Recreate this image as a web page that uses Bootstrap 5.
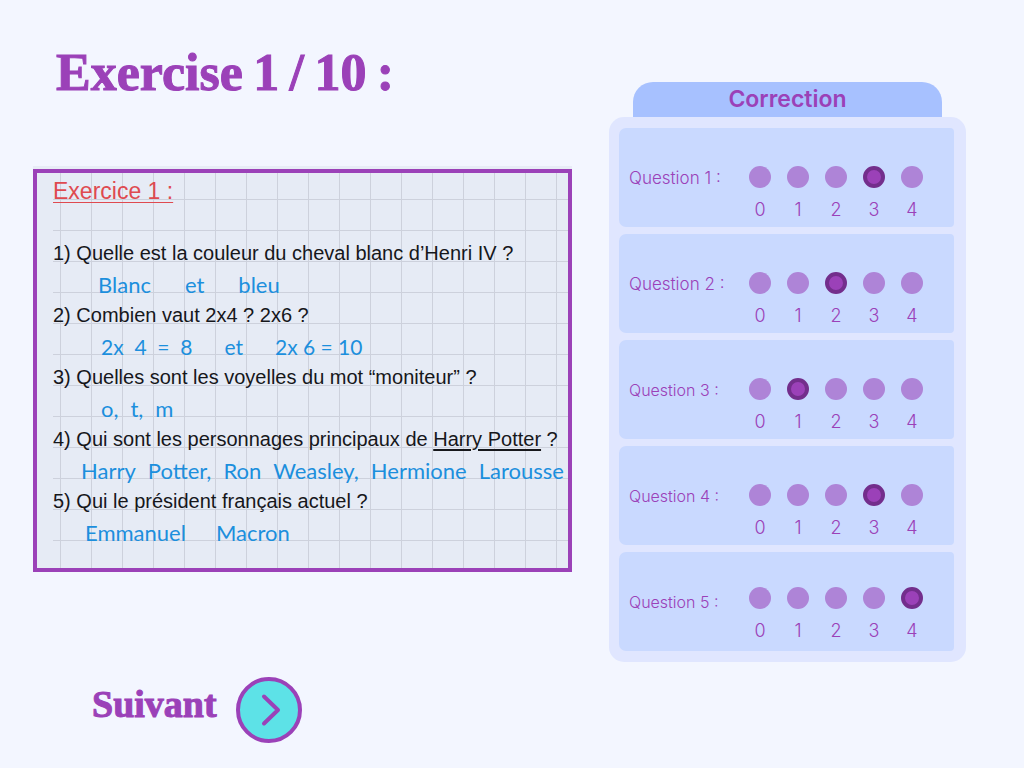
<!DOCTYPE html>
<html lang="fr">
<head>
<meta charset="utf-8">
<meta name="viewport" content="width=device-width, initial-scale=1">
<title>Correction – Exercise 1 / 10</title>
<link href="https://cdn.jsdelivr.net/npm/bootstrap@5.3.0/dist/css/bootstrap.min.css" rel="stylesheet">
<style>
  :root { --violet: #9b41b8; --violet-dark: #732e8c; --violet-soft: #ae84d7; --ink: #1c8fdd; }
  body { background: #f3f6ff; color: var(--violet); font-family: Inter, "Liberation Sans", sans-serif; }
  .page-grid { display: grid; grid-template-columns: minmax(0, 539fr) minmax(0, 357fr); column-gap: 37px; padding: 43px 58px 24px 33px; }
  .display-serif { font-family: "Liberation Serif", serif; font-weight: 700; color: var(--violet); -webkit-text-stroke: 1px var(--violet); }
  .page-title { font-size: 52px; line-height: 60px; padding-left: 23px; margin-bottom: 66px; }

  /* Squared paper: 31px pitch, rows start after the margin */
  .paper {
    border: 4px solid var(--violet); padding: 3px 0 20px 16px; white-space: nowrap;
    background-color: #e6ebf5; box-shadow: 0 -3px 0 #e8ecf6;
    background-image: linear-gradient(#cdd1dc 1px, transparent 1px), linear-gradient(90deg, #cdd1dc 1px, transparent 1px);
    background-size: 31px 31px; background-position: 0 23px, 23px 0;
    background-origin: content-box, padding-box; background-clip: content-box, padding-box;
    font: 20px/31px "Liberation Sans", sans-serif; color: #16171b;
  }
  .paper-title { font: 23px/31px "Liberation Sans", sans-serif; color: #df4a50; margin-bottom: 31px; text-decoration: underline; text-decoration-thickness: 1px; text-underline-offset: 3px; }
  .paper u { text-underline-offset: 3px; }
  .answer { display: flex; margin: 0; color: var(--ink); font: 22px/31px Lato, "Liberation Sans", sans-serif; }
  .answer-1 { padding-left: 45px; gap: 34px; }
  .answer-2 { padding-left: 48px; gap: 32px; font-size: 21px; }
  .answer-3 { padding-left: 48px; gap: 12px; }
  .answer-4 { padding-left: 28px; gap: 12px; }
  .answer-5 { padding-left: 32px; gap: 30px; }

  .next-btn { background: none; border: 0; padding: 0; margin: 105px 0 0 59px; gap: 19px; font-size: 38px; line-height: 48px; }
  .next-btn span { padding-bottom: 12px; }

  .correction { margin-top: 39px; }
  .correction-tab { margin: 0 24px; background: #a7c1ff; border-radius: 20px 20px 0 0; font-size: 23px; line-height: 35px; font-weight: 600; }
  .correction-panel { background: #e0e6ff; border-radius: 15px; padding: 11px 12px 11px 10px; gap: 7px; }
  .question { background: #c9d9ff; border-radius: 7px 4px 4px 7px; height: 99px; padding-left: 10px; }
  .question-name { width: 112px; font-size: 16px; line-height: 24px; font-weight: 300; }
  .question-name.fs-wide { font-size: 17px; }
  .marks { padding-top: 32px; }
  .question:last-child .marks { padding-top: 26px; }
  .mark-option { width: 38px; font-size: 18px; line-height: 24px; font-weight: 300; gap: 10px; }
  .mark-option input { appearance: none; width: 22px; height: 22px; margin: 0; border-radius: 50%; background: var(--violet-soft); }
  .mark-option input:checked { background: var(--violet); border: 4px solid var(--violet-dark); }
</style>
</head>
<body>
<main class="page-grid">
  <section class="d-flex flex-column align-items-stretch">
    <h1 class="display-serif page-title">Exercise&thinsp;1&thinsp;/&thinsp;10&thinsp;:</h1>
    <article class="paper">
      <h2 class="paper-title">Exercice 1 :</h2>
      <p class="m-0">1) Quelle est la couleur du cheval blanc d’Henri IV ?</p>
      <p class="answer answer-1"><span>Blanc</span><span>et</span><span>bleu</span></p>
      <p class="m-0">2) Combien vaut 2x4 ? 2x6 ?</p>
      <p class="answer answer-2"><span>2x&nbsp; 4 &nbsp;= &nbsp;8</span><span>et</span><span>2x 6 = 10</span></p>
      <p class="m-0">3) Quelles sont les voyelles du mot “moniteur” ?</p>
      <p class="answer answer-3"><span>o,</span><span>t,</span><span>m</span></p>
      <p class="m-0">4) Qui sont les personnages principaux de <u>Harry Potter</u> ?</p>
      <p class="answer answer-4"><span>Harry</span><span>Potter,</span><span>Ron</span><span>Weasley,</span><span>Hermione</span><span>Larousse</span></p>
      <p class="m-0">5) Qui le président français actuel ?</p>
      <p class="answer answer-5"><span>Emmanuel</span><span>Macron</span></p>
    </article>
    <button type="button" class="next-btn display-serif d-flex align-items-center align-self-start">
      <span>Suivant</span>
      <svg width="66" height="66" viewBox="0 0 66 66" aria-hidden="true"><circle cx="33" cy="33" r="31" fill="#5de2e7" stroke="#9b41b8" stroke-width="4"/><path d="M28 19.500 42 33 28 46.500" fill="none" stroke="#9b41b8" stroke-width="4" stroke-linecap="round" stroke-linejoin="round"/></svg>
    </button>
  </section>

  <section class="correction">
    <h2 class="correction-tab text-center">Correction</h2>
    <form class="correction-panel d-flex flex-column" id="questions"></form>
  </section>
</main>
<script>
  const given = [3, 2, 1, 3, 4];
  document.getElementById('questions').innerHTML = given.map((mark, i) => `
    <div class="question d-flex align-items-center" role="radiogroup" aria-labelledby="name${i}">
      <span class="question-name ${i < 2 ? 'fs-wide' : ''}" id="name${i}">Question ${i + 1} :</span>
      <div class="marks d-flex">${[0, 1, 2, 3, 4].map(v => `
        <label class="mark-option d-flex flex-column align-items-center"><input type="radio" name="q${i}" value="${v}" ${v === mark ? 'checked' : ''}><span>${v}</span></label>`).join('')}
      </div>
    </div>`).join('');
</script>
<script src="https://cdn.jsdelivr.net/npm/bootstrap@5.3.0/dist/js/bootstrap.bundle.min.js"></script>
</body>
</html>
